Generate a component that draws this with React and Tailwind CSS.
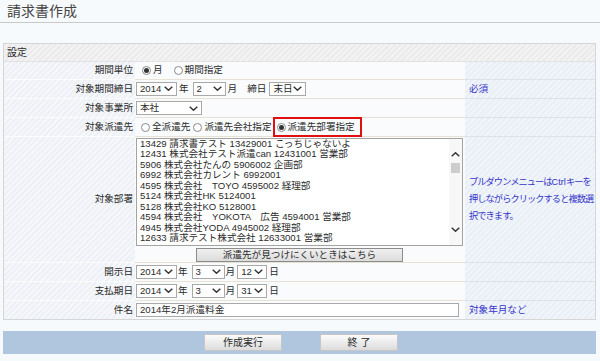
import React from 'react';

const LIST_ITEMS = [
  '13429 請求書テスト 13429001 こっちじゃないよ',
  '12431 株式会社テスト派遣can 12431001 営業部',
  '5906 株式会社たんの 5906002 企画部',
  '6992 株式会社カレント 6992001',
  '4595 株式会社　TOYO 4595002 経理部',
  '5124 株式会社HK 5124001',
  '5128 株式会社KO 5128001',
  '4594 株式会社　YOKOTA　広告 4594001 営業部',
  '4945 株式会社YODA 4945002 経理部',
  '12633 請求テスト株式会社 12633001 営業部',
];

const Chevron = ({ up = false }) => (
  <svg width="9" height="5" viewBox="0 0 9 5" className="shrink-0">
    <path d={up ? 'M0.7 4.3 L4.5 0.8 L8.3 4.3' : 'M0.7 0.7 L4.5 4.2 L8.3 0.7'} fill="none" stroke="#333" strokeWidth="1.5" />
  </svg>
);

// fake select box
const Select = ({ value, className }) => (
  <div className={`flex items-center justify-between h-[14px] border border-[#a9a9a9] bg-white pl-[3px] pr-[3px] whitespace-nowrap ${className}`}>
    <span className="leading-[12px]">{value}</span>
    <Chevron />
  </div>
);

const Radio = ({ checked }) => (
  <span className="w-[9px] h-[9px] rounded-full border border-[#8a8a8a] bg-white flex items-center justify-center shrink-0">
    {checked && <span className="w-[5px] h-[5px] rounded-full bg-[#333]" />}
  </span>
);

const LABEL_BG = 'bg-[repeating-linear-gradient(135deg,#edf1f5_0px,#edf1f5_2px,#f5f7fa_2px,#f5f7fa_4px)]';
const NOTE_BG = 'bg-[repeating-linear-gradient(135deg,#e9eff7_0px,#e9eff7_2px,#f1f5fa_2px,#f1f5fa_4px)]';

const Row = ({ label, h, note, last, children }) => (
  <>
    <div className={`${h} ${LABEL_BG} ${last ? '' : 'border-b border-[#fbfcfd]'} flex items-center justify-end pr-[2px]`}>
      {label}
    </div>
    <div className={`${h} bg-[#f9fbfd] ${last ? '' : 'border-b border-[#e8e1d5]'} flex items-center pl-[1px]`}>
      {children}
    </div>
    <div className={`${h} ${NOTE_BG} ${last ? '' : 'border-b border-[#dbe2ea]'} flex items-center pl-[4px] text-[#3434c8]`}>
      {note}
    </div>
  </>
);

export default function App() {
  return (
    <div className="w-[600px] h-[361px] bg-[#f7fafd] text-[#2b2b2b] text-[9.6px] font-['Liberation_Sans','Noto_Sans_CJK_JP',sans-serif] overflow-hidden">
      <div className="h-[23px] border-b border-[#c9c9c9] pl-[7px] pt-[3px] text-[14px] leading-[16px] text-[#444]">
        請求書作成
      </div>

      <div className="mt-[20px] ml-[3px] w-[593px] border border-[#d6d6d6]">
        <div className="h-[18px] bg-[repeating-linear-gradient(135deg,#ebebeb_0px,#ebebeb_2px,#f3f3f3_2px,#f3f3f3_4px)] border-b border-[#e2e2e2] flex items-center pl-[3px] text-[10px]">
          設定
        </div>

        <div className="grid grid-cols-[131px_330px_1fr]">
          <Row label="期間単位" h="h-[18px]">
            <div className="flex items-center pl-[6px]">
              <Radio checked />
              <span className="ml-[2px]">月</span>
              <span className="ml-[11px]"><Radio /></span>
              <span className="ml-[2px]">期間指定</span>
            </div>
          </Row>

          <Row label="対象期間締日" h="h-[19px]" note="必須">
            <div className="flex items-center">
              <Select value="2014" className="w-[41px]" />
              <span className="ml-[2px]">年</span>
              <Select value="2" className="w-[33px] ml-[4px]" />
              <span className="ml-[2px]">月</span>
              <span className="ml-[10px]">締日</span>
              <Select value="末日" className="w-[37px] ml-[3px]" />
            </div>
          </Row>

          <Row label="対象事業所" h="h-[19px]">
            <Select value="本社" className="w-[66px]" />
          </Row>

          <Row label="対象派遣先" h="h-[19px]">
            <div className="flex items-center pl-[5px] whitespace-nowrap">
              <Radio />
              <span className="ml-[2px]">全派遣先</span>
              <span className="ml-[3px]"><Radio /></span>
              <span className="ml-[2px]">派遣先会社指定</span>
              <div className="ml-[1px] h-[20px] w-[89px] border-2 border-[#e01010] flex items-center pl-[2px]">
                <Radio checked />
                <span className="ml-[2px]">派遣先部署指定</span>
              </div>
            </div>
          </Row>

          <Row
            label="対象部署"
            h="h-[126px]"
            note={
              <div className="leading-[17px] text-[9.2px] tracking-[-0.9px] whitespace-nowrap">
                <div>プルダウンメニューは<span className="tracking-normal">Ctrl</span>キーを</div>
                <div>押しながらクリックすると複数選</div>
                <div>択できます。</div>
              </div>
            }
          >
            <div className="flex flex-col">
              <div className="w-[327px] h-[108px] border border-[#a3a3a3] bg-white flex">
                <div className="flex-1 overflow-hidden pl-[3px] leading-[10.5px] whitespace-nowrap">
                  {LIST_ITEMS.map((item) => (
                    <div key={item}>{item}</div>
                  ))}
                </div>
                <div className="w-[13px] bg-[#f7f7f7] flex flex-col items-center pt-[13px]">
                  <Chevron up />
                  <div className="mt-[6px] w-[9px] h-[10px] bg-[#cdcdcd]" />
                  <div className="flex-1" />
                  <div className="pb-[13px]"><Chevron /></div>
                </div>
              </div>
              <div className="ml-[60px] mt-[2px] w-[207px] h-[14px] border border-[#8c8c8c] bg-gradient-to-b from-[#f0f0f0] to-[#dcdcdc] flex items-center justify-center leading-[12px]">
                派遣先が見つけにくいときはこちら
              </div>
            </div>
          </Row>

          <Row label="開示日" h="h-[19px]">
            <div className="flex items-center">
              <Select value="2014" className="w-[41px]" />
              <span className="ml-[1px]">年</span>
              <Select value="3" className="w-[33px] ml-[4px]" />
              <span className="ml-[1px]">月</span>
              <Select value="12" className="w-[30px] ml-[2px]" />
              <span className="ml-[2px]">日</span>
            </div>
          </Row>

          <Row label="支払期日" h="h-[19px]">
            <div className="flex items-center">
              <Select value="2014" className="w-[41px]" />
              <span className="ml-[1px]">年</span>
              <Select value="3" className="w-[33px] ml-[4px]" />
              <span className="ml-[1px]">月</span>
              <Select value="31" className="w-[30px] ml-[2px]" />
              <span className="ml-[2px]">日</span>
            </div>
          </Row>

          <Row label="件名" h="h-[18px]" note="対象年月など" last>
            <div className="w-[323px] h-[14px] border border-[#a9a9a9] bg-white flex items-center pl-[3px] leading-[12px]">
              2014年2月派遣料金
            </div>
          </Row>
        </div>
      </div>

      <div className="mt-[11px] ml-[3px] w-[593px] h-[23px] bg-[#b0c5de] flex items-center">
        <div className="ml-[201px] w-[78px] h-[17px] border border-[#c6c6c6] bg-gradient-to-b from-[#fbfbfb] to-[#dcdcdc] flex items-center justify-center text-[10px]">
          作成実行
        </div>
        <div className="ml-[38px] w-[78px] h-[17px] border border-[#c6c6c6] bg-gradient-to-b from-[#fbfbfb] to-[#dcdcdc] flex items-center justify-center text-[10px]">
          終 了
        </div>
      </div>
    </div>
  );
}
